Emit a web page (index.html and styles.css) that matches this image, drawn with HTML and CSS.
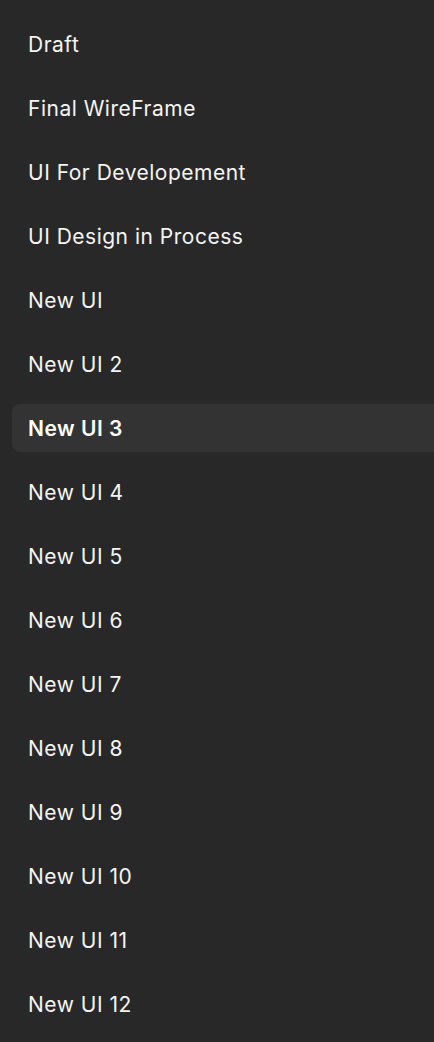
FILE: index.html
```html
<!DOCTYPE html>
<html>
<head>
<meta charset="utf-8">
<link rel="stylesheet" href="styles.css">
</head>
<body>
<ul class="list">
  <li class="item">Draft</li>
  <li class="item">Final WireFrame</li>
  <li class="item">UI For Developement</li>
  <li class="item">UI Design in Process</li>
  <li class="item">New UI</li>
  <li class="item">New UI 2</li>
  <li class="item active">New UI 3</li>
  <li class="item">New UI 4</li>
  <li class="item">New UI 5</li>
  <li class="item">New UI 6</li>
  <li class="item">New UI 7</li>
  <li class="item">New UI 8</li>
  <li class="item">New UI 9</li>
  <li class="item">New UI 10</li>
  <li class="item">New UI 11</li>
  <li class="item">New UI 12</li>
</ul>
</body>
</html>
```
FILE: styles.css
```css
html, body {
  margin: 0;
  padding: 0;
  background: #282828;
  overflow: hidden;
}
body {
  font-family: Inter, "Liberation Sans", sans-serif;
  color: #f4f4f4;
  height: 1042px;
}
.list {
  list-style: none;
  margin: 0;
  padding: 20px 0 0 12px;
  display: flex;
  flex-direction: column;
  gap: 16px;
}
.item {
  height: 48px;
  display: flex;
  align-items: center;
  padding-left: 16px;
  font-size: 21px;
  letter-spacing: 0.5px;
  width: calc(100% + 20px);
  box-sizing: border-box;
  border-radius: 8px;
}
.item.active {
  background: #333333;
  font-weight: 600;
  color: #ffffff;
}
```
